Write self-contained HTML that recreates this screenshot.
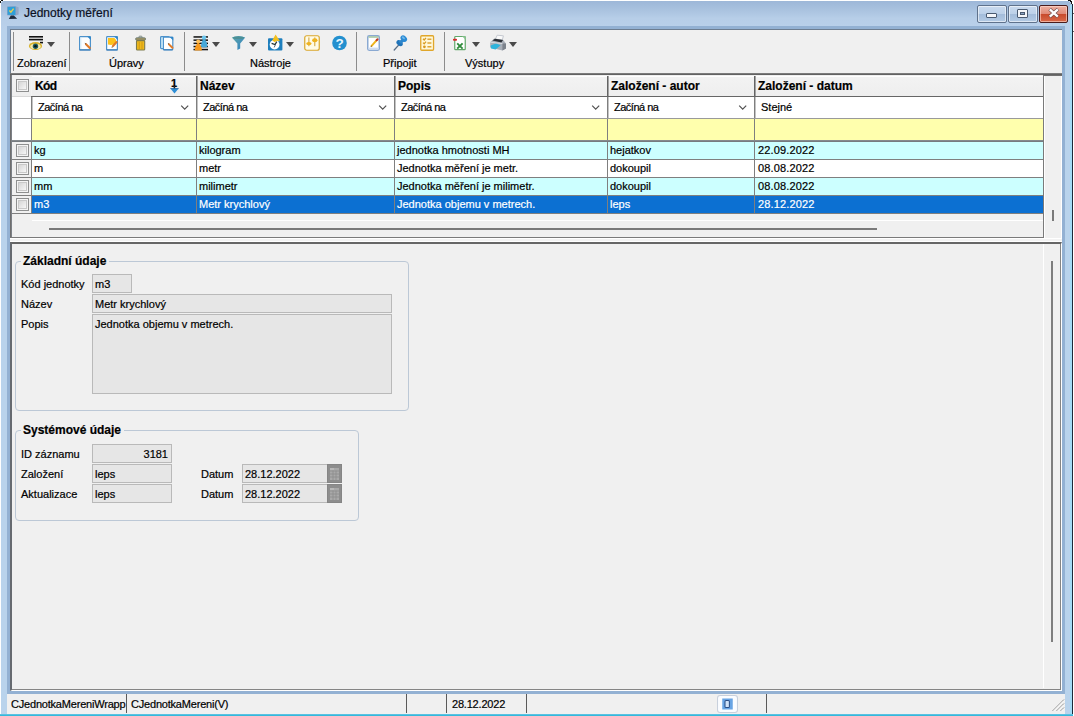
<!DOCTYPE html>
<html lang="cs">
<head>
<meta charset="utf-8">
<title>Jednotky měření</title>
<style>
*{box-sizing:border-box;margin:0;padding:0}
html,body{width:1074px;height:716px;overflow:hidden;background:#fff}
body{font-family:"Liberation Sans",sans-serif;font-size:11px;color:#000;position:relative;-webkit-text-stroke:0.2px currentColor}
.abs{position:absolute}
#win{position:absolute;left:1px;top:1px;width:1071px;height:713px;background:#b9d3ec;border-radius:3px 5px 0 0}
#titlegrad{position:absolute;left:1px;top:1px;width:1071px;height:29px;border-radius:3px 5px 0 0;background:linear-gradient(#9db7d8 0,#a9c2df 30%,#b7cee8 60%,#bad1eb 100%)}
#rborder{position:absolute;left:1072px;top:4px;width:1px;height:710px;background:#1c2a3a}
#botline{position:absolute;left:0;top:714px;width:1073px;height:2px;background:linear-gradient(#6cc6e6,#23b4d6)}
#title{position:absolute;left:24px;top:6px;font-size:12px;color:#0a1022;white-space:nowrap;line-height:14px}
.t{position:absolute;white-space:nowrap;line-height:13px;z-index:5}
.b{font-weight:bold}

.wbtn{position:absolute;top:5px;height:18px;border:1px solid #5f728c;border-radius:2px;background:linear-gradient(#c9daee 0,#bdd1e9 48%,#a3bcda 52%,#b4cbe5 100%);box-shadow:inset 0 0 0 1px rgba(255,255,255,.55)}
.wbtn.close{border-color:#4a1c1c;background:linear-gradient(#eeb0a0 0,#e08a78 48%,#c84a2c 52%,#d9694a 100%);box-shadow:inset 0 0 0 1px rgba(255,220,210,.6)}
.calb{width:15px;height:19px;background:#8d8d8d;border:1px solid #858585}
</style>
</head>
<body>
<div id="win"></div>
<div id="titlegrad"></div>
<div id="rborder"></div>
<div class="abs" style="left:1070px;top:5px;width:2px;height:709px;background:#a2dbf6"></div>
<div id="botline"></div>
<div class="abs" style="left:0;top:1px;width:1px;height:2px;background:#111"></div>
<div class="abs" style="left:1px;top:0;width:2px;height:1px;background:#111"></div>
<div class="abs" style="left:1068px;top:0;width:3px;height:1px;background:#111"></div>
<div class="abs" style="left:1070px;top:1px;width:2px;height:1px;background:#111"></div>
<div class="abs" style="left:1071px;top:2px;width:1px;height:2px;background:#111"></div>
<div class="abs" style="left:1073px;top:13px;width:1px;height:1px;background:#666"></div>
<div class="abs" style="left:1073px;top:31px;width:1px;height:1px;background:#666"></div>
<div id="title">Jednotky měření</div>
<style>
#inner{position:absolute;left:7px;top:26px;width:1058px;height:668px;background:#93b1d3}
#content{position:absolute;left:10px;top:29px;width:1052px;height:661px;background:#f0f0f0}
#tb{position:absolute;left:10px;top:29px;width:1052px;height:45px;background:#f0f0f0;border-top:1px solid #6d7d90;border-left:1px solid #6d7d90}
.vsep{position:absolute;top:32px;width:1px;height:39px;background:#8c8c8c}
.tlabel{position:absolute;top:57px;line-height:13px;white-space:nowrap;text-align:center}
.dd{position:absolute;width:0;height:0;border-left:4.5px solid transparent;border-right:4.5px solid transparent;border-top:5px solid #4a4a4a;top:42px}
.ico{position:absolute;z-index:5}
#gridtop{position:absolute;left:10px;top:73px;width:1052px;height:3px;background:linear-gradient(#7c7c7c 0,#7c7c7c 33%,#626262 33%,#626262 67%,#707070 67%)}
#grid{position:absolute;left:10px;top:75px;width:1034px;height:163px;border-left:1px solid #6e6e6e;border-right:1px solid #7a7a7a;border-bottom:1px solid #7a7a7a;background:#f0f0f0;overflow:hidden}
.row{position:absolute;left:0;width:1032px}
.cell{position:absolute;top:0;height:100%;border-left:1px solid #7f7f7f;white-space:nowrap;overflow:hidden;padding-left:2px}
.hdr .cell{border-left:1px solid #646464;font-weight:bold;font-size:12px;padding-left:3px;box-shadow:inset 1px 0 0 #a4a4a4,inset 0 1px 0 #fff}
.frow .cell{box-shadow:inset 1px 0 0 #c4c4c4}
.cb{position:absolute;width:13px;height:13px;border:1px solid #8e8f8f;background:#f4f4f4}
.cb:after{content:"";box-sizing:border-box;position:absolute;left:1px;top:1px;width:9px;height:9px;border:1px solid #c9c9c9;background:linear-gradient(135deg,#d6d6d6,#f6f6f6)}
.chev{position:absolute;top:8px;width:9px;height:5px}
#panel{position:absolute;left:10px;top:242px;width:1052px;height:449px;border-top:2px solid #666;border-left:2px solid #666a70;border-right:1px solid #fff;border-bottom:1px solid #fff;background:#f0f0f0;box-shadow:inset -1px -1px 0 #858585}
.gb{position:absolute;border:1px solid #bcc8d6;border-radius:4px}
.gbt{position:absolute;top:-7px;left:5px;padding:0 3px 0 2px;background:#f0f0f0;font-weight:bold;font-size:12px;line-height:13px;white-space:nowrap}
.fld{position:absolute;height:19px;border:1px solid #b9b9b9;background:#e6e6e6;line-height:18px;padding-left:2px;white-space:nowrap;overflow:hidden}
.lbl{position:absolute;line-height:13px;white-space:nowrap}
#sb{position:absolute;left:7px;top:694px;width:1058px;height:20px;background:#f0f0f0}
.ssep{position:absolute;top:694px;width:1px;height:19px;background:#5a5a5a}
.st{position:absolute;top:698px;line-height:13px;white-space:nowrap;letter-spacing:-0.2px}
</style>
<div id="inner"></div>
<div id="content"></div>
<div id="tb"></div>
<div class="vsep" style="left:13px"></div>
<div class="vsep" style="left:69px"></div>
<div class="vsep" style="left:184px"></div>
<div class="vsep" style="left:356px"></div>
<div class="vsep" style="left:444px"></div>
<div class="tlabel" style="left:17px">Zobrazení</div>
<div class="tlabel" style="left:109px">Úpravy</div>
<div class="tlabel" style="left:250px">Nástroje</div>
<div class="tlabel" style="left:383px">Připojit</div>
<div class="tlabel" style="left:465px">Výstupy</div>
<div class="dd" style="left:47px"></div>
<div class="dd" style="left:212px"></div>
<div class="dd" style="left:249px"></div>
<div class="dd" style="left:286px"></div>
<div class="dd" style="left:472px"></div>
<div class="dd" style="left:509px"></div>
<!-- title icon -->
<svg class="ico" style="left:6px;top:5px" width="14" height="15" viewBox="0 0 14 15">
  <path d="M9.8 1.2L12.6 2.2V9.6L9.8 10.6Z" fill="#93a7c6"/>
  <path d="M1.2 1.6L9.8 1.2V10.6L1.2 10.2Z" fill="#7f9cc4"/>
  <path d="M1.7 2.1L9.4 1.8V10.1L1.7 9.7Z" fill="#2e9fd8"/>
  <path d="M3.4 5.6L4.9 7.2L7.6 3.6" fill="none" stroke="#e6cf52" stroke-width="1.4"/>
  <path d="M4.8 10.4L7.8 10.4L11.2 13.8L2.8 14Z" fill="#1f2c3e"/>
</svg>
<!-- eye/view -->
<svg class="ico" style="left:28px;top:35px" width="16" height="16" viewBox="0 0 16 16">
  <rect x="1" y="1" width="14" height="1.6" fill="#111"/>
  <rect x="1" y="3.8" width="14" height="1.6" fill="#111"/>
  <rect x="12" y="6.8" width="3" height="1.6" fill="#111"/>
  <ellipse cx="7.5" cy="11" rx="6.6" ry="4" fill="#d9b22a"/>
  <ellipse cx="7.5" cy="11.4" rx="5.2" ry="2.6" fill="#f3e9b0"/>
  <circle cx="7.5" cy="11.3" r="2.7" fill="#1f5a5a"/>
  <circle cx="7.5" cy="11.3" r="1.3" fill="#06161c"/>
</svg>
<!-- new doc -->
<svg class="ico" style="left:79px;top:36px" width="13" height="15" viewBox="0 0 13 15">
  <rect x="0.6" y="0.6" width="10.8" height="13.4" rx="0.8" fill="#fdfeff" stroke="#4d92cb" stroke-width="1.2"/>
  <rect x="0.4" y="13.2" width="11.2" height="1.2" rx="0.5" fill="#3a7db8"/>
  <rect x="1.4" y="1.4" width="1" height="11.6" fill="#d8eefb"/>
  <path d="M8.2 0.4L11.8 0.4L11.8 4Z" fill="#2f86c8"/>
  <path d="M7 8.2L10.8 12" stroke="#e07a28" stroke-width="2.1" stroke-linecap="round"/>
  <path d="M5.6 6.8L7.4 7.4L6.4 8.6Z" fill="#7a5a3a"/>
</svg>
<!-- edit doc -->
<svg class="ico" style="left:106px;top:36px" width="13" height="15" viewBox="0 0 13 15">
  <rect x="0.6" y="0.6" width="10.8" height="13.4" rx="0.8" fill="#fdfeff" stroke="#4d92cb" stroke-width="1.2"/>
  <rect x="0.4" y="13.2" width="11.2" height="1.2" rx="0.5" fill="#3a7db8"/>
  <path d="M2 2H8.4L10 3.8V7.6Q6.6 9.6 2 8.6Z" fill="#fcc21b"/>
  <path d="M8.2 0.4L11.8 0.4L11.8 4Z" fill="#2f86c8"/>
  <path d="M10.6 6L7 10" stroke="#e07a28" stroke-width="2.1" stroke-linecap="round"/>
  <path d="M5.4 11.8L6 10.2L7.2 11.2Z" fill="#7a5a3a"/>
</svg>
<!-- trash -->
<svg class="ico" style="left:134px;top:35px" width="13" height="16" viewBox="0 0 13 16">
  <rect x="4.8" y="1.2" width="3.4" height="2" rx="1" fill="none" stroke="#7d8a84" stroke-width="1"/>
  <rect x="1.6" y="2.8" width="10" height="2.4" rx="1.2" fill="#a0925a" stroke="#6f7f7c" stroke-width="0.9"/>
  <rect x="2.5" y="5.6" width="8.2" height="9.4" rx="0.8" fill="#efb91c" stroke="#7d7a4c" stroke-width="1.1"/>
  <rect x="4.7" y="7" width="1" height="7" fill="#cf9a14"/>
  <rect x="7.5" y="7" width="1" height="7" fill="#cf9a14"/>
</svg>
<!-- copy -->
<svg class="ico" style="left:160px;top:36px" width="15" height="15" viewBox="0 0 15 15">
  <rect x="0.6" y="0.6" width="8.6" height="12" rx="0.8" fill="#d3effb" stroke="#4d92cb" stroke-width="1.2"/>
  <rect x="3.4" y="1.2" width="9.4" height="12.6" rx="0.8" fill="#fdfeff" stroke="#4d92cb" stroke-width="1.2"/>
  <rect x="3.2" y="13.2" width="9.8" height="1.1" rx="0.5" fill="#3a7db8"/>
  <path d="M9.6 1L13.2 1L13.2 4.6Z" fill="#2f86c8"/>
  <path d="M9 8.4L12.4 11.8" stroke="#e07a28" stroke-width="2" stroke-linecap="round"/>
  <path d="M7.8 7L9.4 7.6L8.4 8.8Z" fill="#7a5a3a"/>
</svg>
<!-- people list -->
<svg class="ico" style="left:193px;top:35px" width="16" height="16" viewBox="0 0 16 16">
  <g fill="#111"><rect x="0.5" y="1.2" width="14.5" height="1.5"/><rect x="0.5" y="4.4" width="14.5" height="1.5"/><rect x="0.5" y="7.6" width="14.5" height="1.5"/><rect x="0.5" y="10.8" width="14.5" height="1.5"/><rect x="0.5" y="13.8" width="14.5" height="1.5"/></g>
  <circle cx="11" cy="2.6" r="2.2" fill="#6cc6ee"/>
  <path d="M11 3.4C13 5 14.6 8.4 14.4 11.8Q11 13 8 11.8C8 8.4 9 5 11 3.4Z" fill="#46a8d8"/>
  <circle cx="5.2" cy="6.6" r="2" fill="#ffc15a"/>
  <path d="M5.2 7.6C7 9 8.8 12 8.9 15.4H1.7C1.8 12 3.4 9 5.2 7.6Z" fill="#f79a1e"/>
</svg>
<!-- funnel -->
<svg class="ico" style="left:231px;top:35px" width="15" height="16" viewBox="0 0 15 16">
  <defs><linearGradient id="fg" x1="0" y1="0" x2="1" y2="1"><stop offset="0" stop-color="#5fa8a8"/><stop offset="1" stop-color="#2f7fc4"/></linearGradient></defs>
  <path d="M0.8 2.6Q7.5 -0.6 14.2 2.6L9.2 8.6V13.4L6.4 15V8.6Z" fill="url(#fg)"/>
  <ellipse cx="7.5" cy="2.8" rx="5.6" ry="1.3" fill="#4c9096"/>
</svg>
<!-- clock w/ arrow -->
<svg class="ico" style="left:267px;top:34px" width="16" height="17" viewBox="0 0 16 17">
  <rect x="1" y="4.2" width="14.4" height="12.4" rx="1" fill="#1f7fbd"/>
  <circle cx="7.6" cy="10.6" r="4.9" fill="#fff"/>
  <path d="M4.6 9.4L8 10.6L9.8 7.6" fill="none" stroke="#233" stroke-width="1.2"/>
  <path d="M7.2 13.4L8.8 9.8" stroke="#456" stroke-width="0.9"/>
  <path d="M8.6 0.6L13 7.2L9.6 6.8L8 8.2L5.2 6.4Z" fill="#f3bf1d"/>
</svg>
<!-- sliders -->
<svg class="ico" style="left:304px;top:35px" width="16" height="16" viewBox="0 0 16 16">
  <rect x="0.75" y="0.75" width="14.5" height="14.5" rx="2" fill="#fffbe6" stroke="#d9a72c" stroke-width="1.2"/>
  <rect x="4.4" y="2.4" width="1" height="8.8" fill="#cfa033"/>
  <rect x="10.3" y="2.4" width="1" height="8.8" fill="#cfa033"/>
  <ellipse cx="4.9" cy="8.6" rx="2.7" ry="1.6" fill="#efb320"/>
  <ellipse cx="10.8" cy="5.2" rx="2.7" ry="2" fill="#efb320"/>
</svg>
<!-- help -->
<svg class="ico" style="left:332px;top:35px" width="16" height="16" viewBox="0 0 16 16">
  <circle cx="7.5" cy="8" r="7.3" fill="#2390cf"/>
  <text x="7.6" y="12.9" font-family="Liberation Sans, sans-serif" font-weight="bold" font-size="13.5" fill="#eaf8ff" text-anchor="middle" style="-webkit-text-stroke:0">?</text>
</svg>
<!-- notepad -->
<svg class="ico" style="left:367px;top:35px" width="14" height="16" viewBox="0 0 14 16">
  <rect x="0.75" y="0.75" width="11.5" height="14.5" rx="1.4" fill="#fff" stroke="#8aa9d2" stroke-width="1.5"/>
  <rect x="1.5" y="1.2" width="10" height="1.6" fill="#a9c9a4"/>
  <rect x="1.5" y="12.6" width="10" height="2" fill="#cfdcf0"/>
  <path d="M4.6 10.8L10 4.8" stroke="#efb51c" stroke-width="2" stroke-linecap="round"/>
  <path d="M9.6 5.2L10.6 4.2" stroke="#c0392b" stroke-width="2" stroke-linecap="round"/>
  <path d="M3.6 12L4 10.4L5.2 11.2Z" fill="#6a4a2a"/>
</svg>
<!-- pin -->
<svg class="ico" style="left:393px;top:35px" width="15" height="16" viewBox="0 0 15 16">
  <path d="M1.2 15L7 8.6" stroke="#5a6f86" stroke-width="1.3" stroke-linecap="round"/>
  <ellipse cx="6.6" cy="8.2" rx="3.6" ry="2.4" transform="rotate(40 6.6 8.2)" fill="#1f73b8"/>
  <path d="M5.6 6.4L9.8 3.4L11.8 5.8L8 9Z" fill="#2d86cc"/>
  <ellipse cx="10.8" cy="3.6" rx="3.6" ry="2.7" transform="rotate(40 10.8 3.6)" fill="#2a8ad4"/>
  <ellipse cx="10.4" cy="2.8" rx="1.8" ry="1" transform="rotate(40 10.4 2.8)" fill="#6fb8ea"/>
</svg>
<!-- checklist -->
<svg class="ico" style="left:420px;top:35px" width="15" height="16" viewBox="0 0 15 16">
  <rect x="0.75" y="0.75" width="12.8" height="14.5" rx="1" fill="#fff8da" stroke="#e0a62a" stroke-width="1.3"/>
  <g stroke="#d99a1e" stroke-width="1.3" fill="none">
    <path d="M3 3.8L4.2 5L6 2.8"/><path d="M3 7.6L4.2 8.8L6 6.6"/>
    <path d="M7.4 4.2H11.4"/><path d="M7.4 8H11.4"/><path d="M7.4 11.8H11.4"/>
  </g>
  <circle cx="4.4" cy="11.8" r="1.4" fill="#d99a1e"/>
</svg>
<!-- excel -->
<svg class="ico" style="left:453px;top:35px" width="14" height="16" viewBox="0 0 14 16">
  <rect x="1.75" y="1.5" width="10.5" height="13.2" rx="0.8" fill="#fff" stroke="#62a86a" stroke-width="1.2"/>
  <path d="M9 1.2L12.6 1.2L12.6 4.8Z" fill="#8cc592"/>
  <path d="M4.2 8.4L9.6 13.6M9.6 8.4L4.2 13.6" stroke="#2e8b3a" stroke-width="1.9"/>
  <rect x="0" y="3.8" width="4" height="2" rx="0.8" fill="#d62a2a"/>
</svg>
<!-- printer -->
<svg class="ico" style="left:489px;top:34px" width="18" height="17" viewBox="0 0 18 17">
  <path d="M8.2 1.2L14.4 1.8L13 7L6 6Z" fill="#fafafa" stroke="#b9bec6" stroke-width="0.8"/>
  <path d="M1.2 8.2L5.4 4.6L14 5.8L17 9.4V14.4L13.4 16.4L1.2 13.6Z" fill="#a9afb8"/>
  <path d="M3.4 6.6L6 4.8L14 6L12.4 8.4Z" fill="#2b2f36"/>
  <path d="M13.4 9.6L17 9.4V14.4L13.4 16.4Z" fill="#7d838c"/>
  <path d="M1.6 11.6L7 9.4L11.6 11.2L6.6 15.6L2 14.4Z" fill="#2fb4dc"/>
  <path d="M1.2 8.2L13.4 9.6" stroke="#d8dce2" stroke-width="1"/>
</svg>
<!-- sort indicator -->
<div class="t b" style="left:171px;top:77px;font-size:11px">1</div>
<svg class="ico" style="left:170px;top:86px" width="9" height="8" viewBox="0 0 9 8">
  <rect x="3.6" y="0" width="1.6" height="3" fill="#222"/>
  <path d="M0.4 2.6H8.6L4.5 7.6Z" fill="#2f8fd6"/>
  <path d="M0.4 2.6H8.6" stroke="#1d5f9a" stroke-width="0.8"/>
</svg>
<!-- status icon -->
<svg class="ico" style="left:717px;top:695px" width="21" height="18" viewBox="0 0 20 18" preserveAspectRatio="none">
  <rect x="0.5" y="0.5" width="19" height="17" rx="2.5" fill="#fafcff" stroke="#c8d0dc"/>
  <rect x="5" y="3.5" width="10" height="11" fill="#68a4e4"/>
  <rect x="7.6" y="5.4" width="4.2" height="7.2" rx="1" fill="#cfe2f8" stroke="#2c4f86" stroke-width="1"/>
</svg>
<!-- window buttons -->
<div class="wbtn" style="left:977px;width:30px"></div>
<div class="wbtn" style="left:1008px;width:30px"></div>
<div class="wbtn close" style="left:1039px;width:29px"></div>
<div class="abs" style="left:986px;top:13px;width:11px;height:5px;background:#f4f6fa;border:1px solid #4a5a70;border-radius:1px"></div>
<div class="abs" style="left:1017px;top:9px;width:11px;height:9px;background:#f4f6fa;border:1px solid #4a5a70;border-radius:1px"></div>
<div class="abs" style="left:1020px;top:12px;width:5px;height:3px;background:#8aa4c4;border:1px solid #4a5a70"></div>
<svg class="ico" style="left:1048px;top:8px" width="12" height="10" viewBox="0 0 12 10">
  <path d="M1.6 1.2L10 8.8M10 1.2L1.6 8.8" stroke="#6a4444" stroke-width="3.6" stroke-linecap="butt"/>
  <path d="M1.8 1.4L9.8 8.6M9.8 1.4L1.8 8.6" stroke="#fff" stroke-width="2.4" stroke-linecap="butt"/>
</svg>
<!-- resize grip -->
<svg class="ico" style="left:1052px;top:699px" width="13" height="13" viewBox="0 0 13 13">
  <path d="M12 0.5L0.5 12M12 4.5L4.5 12M12 8.5L8.5 12" stroke="#8a8a8a" stroke-width="1"/>
  <path d="M12 1.5L1.5 12M12 5.5L5.5 12M12 9.5L9.5 12" stroke="#fff" stroke-width="0.8"/>
</svg>

<div id="gridtop"></div>
<div id="grid">
  <div class="abs" style="left:0;top:0;width:1px;height:163px;background:#7c8086;z-index:3"></div>
  <div class="row hdr" style="top:1px;height:20px;background:linear-gradient(#f3f3f3,#eeeeee);line-height:20px">
    <div class="cb" style="left:5px;top:3px"></div>
    <div class="cell" style="left:20px;width:165px;border-left-color:#f4f4f4;box-shadow:inset 0 1px 0 #fff;letter-spacing:-0.6px">Kód</div>
    <div class="cell" style="left:185px;width:198px">Název</div>
    <div class="cell" style="left:383px;width:213px">Popis</div>
    <div class="cell" style="left:596px;width:147px">Založení - autor</div>
    <div class="cell" style="left:743px;width:290px">Založení - datum</div>
  </div>
  <div class="abs" style="left:0;top:21px;width:1032px;height:1px;background:#d8d8d8"></div><div class="abs" style="left:20px;top:21px;width:1012px;height:1px;background:#666"></div>
  <div class="row frow" style="top:22px;height:21px;background:#fff;line-height:21px">
    <div class="cell" style="left:20px;width:165px;padding-left:6px;letter-spacing:-0.5px">Začíná na</div>
    <div class="cell" style="left:185px;width:198px;padding-left:6px;letter-spacing:-0.5px">Začíná na</div>
    <div class="cell" style="left:383px;width:213px;padding-left:6px;letter-spacing:-0.5px">Začíná na</div>
    <div class="cell" style="left:596px;width:147px;padding-left:6px;letter-spacing:-0.5px">Začíná na</div>
    <div class="cell" style="left:743px;width:290px;padding-left:6px">Stejné</div>
    <svg class="chev" style="left:169px" viewBox="0 0 9 5"><path d="M1.2 0.6L4.7 4.1L8.2 0.6" fill="none" stroke="#505050" stroke-width="1.2"/></svg>
    <svg class="chev" style="left:367px" viewBox="0 0 9 5"><path d="M1.2 0.6L4.7 4.1L8.2 0.6" fill="none" stroke="#505050" stroke-width="1.2"/></svg>
    <svg class="chev" style="left:580px" viewBox="0 0 9 5"><path d="M1.2 0.6L4.7 4.1L8.2 0.6" fill="none" stroke="#505050" stroke-width="1.2"/></svg>
    <svg class="chev" style="left:727px" viewBox="0 0 9 5"><path d="M1.2 0.6L4.7 4.1L8.2 0.6" fill="none" stroke="#505050" stroke-width="1.2"/></svg>
  </div>
  <div class="abs" style="left:0;top:43px;width:1032px;height:1px;background:#9a9a9a"></div>
  <div class="row" style="top:44px;height:21px;background:#fff">
    <div class="cell" style="left:20px;width:1012px;background:#ffffad"></div>
    <div class="cell" style="left:185px;width:10px"></div>
    <div class="cell" style="left:383px;width:10px"></div>
    <div class="cell" style="left:596px;width:10px"></div>
    <div class="cell" style="left:743px;width:10px"></div>
  </div>
  <div class="abs" style="left:0;top:65px;width:1032px;height:2px;background:linear-gradient(#8c9094,#6e7478)"></div>
  <div class="row" style="top:67px;height:17px;background:#ccffff;line-height:17px">
    <div class="abs" style="left:0;top:0;width:20px;height:17px;background:#f0f0f0"></div><div class="cb" style="left:5px;top:2px"></div>
    <div class="cell" style="left:20px;width:165px">kg</div>
    <div class="cell" style="left:185px;width:198px">kilogram</div>
    <div class="cell" style="left:383px;width:213px">jednotka hmotnosti MH</div>
    <div class="cell" style="left:596px;width:147px">hejatkov</div>
    <div class="cell" style="left:743px;width:290px;padding-left:3px;letter-spacing:0.15px">22.09.2022</div>
  </div>
  <div class="abs" style="left:0;top:84px;width:1032px;height:1px;background:#7f7f7f"></div>
  <div class="row" style="top:85px;height:17px;background:#fff;line-height:17px">
    <div class="abs" style="left:0;top:0;width:20px;height:17px;background:#f0f0f0"></div><div class="cb" style="left:5px;top:2px"></div>
    <div class="cell" style="left:20px;width:165px">m</div>
    <div class="cell" style="left:185px;width:198px">metr</div>
    <div class="cell" style="left:383px;width:213px">Jednotka měření je metr.</div>
    <div class="cell" style="left:596px;width:147px">dokoupil</div>
    <div class="cell" style="left:743px;width:290px;padding-left:3px;letter-spacing:0.15px">08.08.2022</div>
  </div>
  <div class="abs" style="left:0;top:102px;width:1032px;height:1px;background:#7f7f7f"></div>
  <div class="row" style="top:103px;height:17px;background:#ccffff;line-height:17px">
    <div class="abs" style="left:0;top:0;width:20px;height:17px;background:#f0f0f0"></div><div class="cb" style="left:5px;top:2px"></div>
    <div class="cell" style="left:20px;width:165px">mm</div>
    <div class="cell" style="left:185px;width:198px">milimetr</div>
    <div class="cell" style="left:383px;width:213px">Jednotka měření je milimetr.</div>
    <div class="cell" style="left:596px;width:147px">dokoupil</div>
    <div class="cell" style="left:743px;width:290px;padding-left:3px;letter-spacing:0.15px">08.08.2022</div>
  </div>
  <div class="abs" style="left:0;top:120px;width:1032px;height:1px;background:#7f7f7f"></div>
  <div class="row" style="top:121px;height:17px;background:#0c70d2;color:#fff;line-height:17px">
    <div class="abs" style="left:0;top:0;width:20px;height:17px;background:#f0f0f0"></div><div class="cb" style="left:5px;top:2px"></div>
    <div class="cell" style="left:20px;width:165px">m3</div>
    <div class="cell" style="left:185px;width:198px">Metr krychlový</div>
    <div class="cell" style="left:383px;width:213px">Jednotka objemu v metrech.</div>
    <div class="cell" style="left:596px;width:147px">leps</div>
    <div class="cell" style="left:743px;width:290px;padding-left:3px;letter-spacing:0.15px">28.12.2022</div>
  </div>
  <div class="abs" style="left:0;top:138px;width:1032px;height:1px;background:#7f7f7f"></div>
  <div class="abs" style="left:21px;top:145px;width:1011px;height:1px;background:#fff"></div>
  <div class="abs" style="left:38px;top:153px;width:828px;height:2px;background:#7a7a7a"></div>
</div>
<div class="abs" style="left:1052px;top:210px;width:2px;height:11px;background:#7a7a7a"></div>
<div class="abs" style="left:1061px;top:76px;width:1px;height:162px;background:#fff"></div>
<div class="abs" style="left:10px;top:238px;width:1052px;height:4px;background:#f3f3f3;border-top:1px solid #fff;border-bottom:1px solid #fff"></div>
<div class="abs" style="left:1044px;top:76px;width:1px;height:162px;background:#fff"></div>
<div id="panel"></div>
<div class="abs" style="left:1043px;top:244px;width:1px;height:444px;background:#fff"></div>
<div class="abs" style="left:1051px;top:261px;width:2px;height:381px;background:#7e7e7e"></div>

<div class="gb" style="left:15px;top:261px;width:394px;height:150px"><div class="gbt">Základní údaje</div></div>
<div class="lbl" style="left:21px;top:278px">Kód jednotky</div>
<div class="lbl" style="left:21px;top:298px">Název</div>
<div class="lbl" style="left:21px;top:318px">Popis</div>
<div class="fld" style="left:92px;top:274px;width:40px">m3</div>
<div class="fld" style="left:92px;top:294px;width:300px">Metr krychlový</div>
<div class="fld" style="left:92px;top:314px;width:300px;height:80px">Jednotka objemu v metrech.</div>

<div class="gb" style="left:15px;top:430px;width:344px;height:91px"><div class="gbt">Systémové údaje</div></div>
<div class="lbl" style="left:21px;top:448px">ID záznamu</div>
<div class="lbl" style="left:21px;top:468px">Založení</div>
<div class="lbl" style="left:21px;top:488px">Aktualizace</div>
<div class="fld" style="left:92px;top:444px;width:80px;text-align:right;padding-right:3px">3181</div>
<div class="fld" style="left:92px;top:464px;width:80px">leps</div>
<div class="fld" style="left:92px;top:484px;width:80px">leps</div>
<div class="lbl" style="left:201px;top:468px">Datum</div>
<div class="lbl" style="left:201px;top:488px">Datum</div>
<div class="fld" style="left:242px;top:464px;width:100px">28.12.2022</div>
<div class="fld" style="left:242px;top:484px;width:100px">28.12.2022</div>
<div class="abs calb" style="left:327px;top:464px"><svg width="9" height="12" viewBox="0 0 9 12" style="position:absolute;left:2px;top:3px"><rect x="0" y="0" width="9" height="12" fill="#a9a9a9"/><rect x="0" y="0" width="4" height="2" fill="#b8b8b8"/><g fill="#8d8d8d"><rect x="0" y="2.6" width="9" height="0.8"/><rect x="0" y="5.6" width="9" height="0.8"/><rect x="0" y="8.6" width="9" height="0.8"/><rect x="2.6" y="2.6" width="0.8" height="9.4"/><rect x="5.6" y="2.6" width="0.8" height="9.4"/></g></svg></div>
<div class="abs calb" style="left:327px;top:484px"><svg width="9" height="12" viewBox="0 0 9 12" style="position:absolute;left:2px;top:3px"><rect x="0" y="0" width="9" height="12" fill="#a9a9a9"/><rect x="0" y="0" width="4" height="2" fill="#b8b8b8"/><g fill="#8d8d8d"><rect x="0" y="2.6" width="9" height="0.8"/><rect x="0" y="5.6" width="9" height="0.8"/><rect x="0" y="8.6" width="9" height="0.8"/><rect x="2.6" y="2.6" width="0.8" height="9.4"/><rect x="5.6" y="2.6" width="0.8" height="9.4"/></g></svg></div>

<div id="sb"></div>
<div class="ssep" style="left:126px"></div>
<div class="ssep" style="left:406px"></div>
<div class="ssep" style="left:446px"></div>
<div class="ssep" style="left:526px"></div>
<div class="ssep" style="left:766px"></div>
<div class="st" style="left:11px;width:115px;overflow:hidden">CJednotkaMereniWrapp</div>
<div class="st" style="left:131px">CJednotkaMereni(V)</div>
<div class="st" style="left:452px">28.12.2022</div>

</body>
</html>
